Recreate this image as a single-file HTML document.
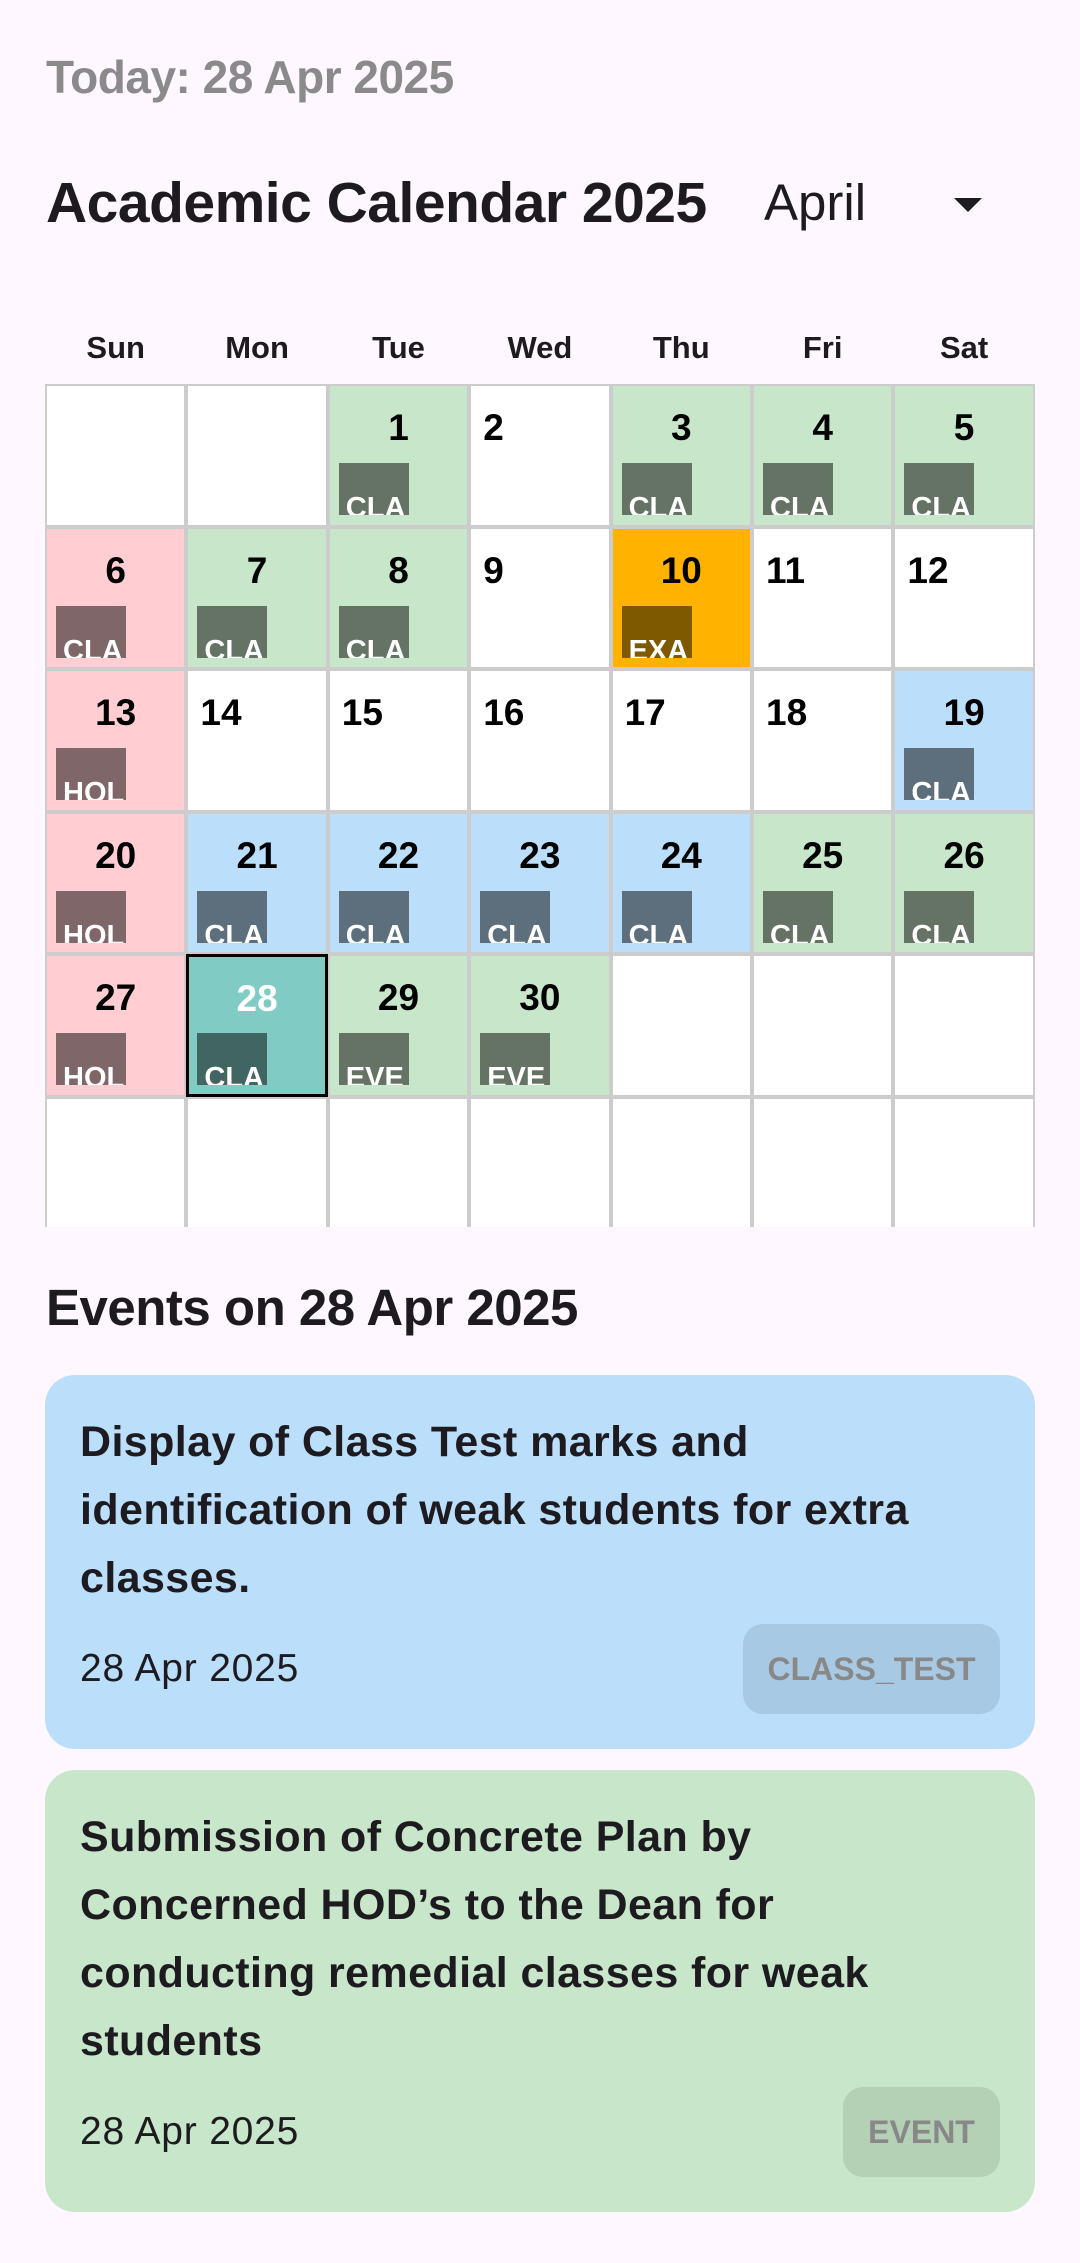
<!DOCTYPE html>
<html><head><meta charset="utf-8"><style>
*{box-sizing:border-box;margin:0;padding:0}
body{width:1080px;height:2263px;background:#fef7ff;font-family:"Liberation Sans",sans-serif;color:#1d1b20;position:relative;overflow:hidden}
.abs{position:absolute;white-space:nowrap}
#today{left:46px;top:50px;font-size:46px;font-weight:bold;color:#8a8a8a;letter-spacing:-0.5px}
#title{left:46px;top:170px;font-size:57px;font-weight:bold;letter-spacing:-0.5px}
#month{left:764px;top:173px;font-size:51px}
#tri{left:954px;top:198px;width:0;height:0;border-left:14px solid transparent;border-right:14px solid transparent;border-top:14px solid #1d1b20}
.dh{position:absolute;top:330px;width:141.4px;text-align:center;font-size:31px;font-weight:bold}
#grid{position:absolute;left:45px;top:384px;width:990px;height:843px;overflow:hidden}
.c{position:absolute;width:141.4px;height:142.5px;border:2px solid #ccc;background:#fff}
.n{position:absolute;top:20px;font-size:37px;font-weight:bold;color:#000;line-height:44px}
.col .n{left:0;right:0;text-align:center}
.wh .n{left:12px}
.b{position:absolute;left:9px;top:77px;width:70px;height:52px;overflow:hidden;color:#fff;font-weight:bold;font-size:29px;line-height:28px;padding:31px 0 0 7px;background:rgba(0,0,0,.5)}
.g{background:#c8e6c9}.p{background:#ffcdd2}.bl{background:#bbdefb}.o{background:#ffb300}
.t{background:#80cbc4;border:3px solid #000}.t .n{color:#fff}
#ev{left:46px;top:1278px;font-size:51px;font-weight:bold;letter-spacing:-0.5px}
.card{position:absolute;left:45px;width:990px;border-radius:30px;padding:33px 35px 35px 35px}
.card .tx{font-size:43px;font-weight:bold;line-height:68px;white-space:nowrap;letter-spacing:0.4px}
.row{margin-top:12px;height:90px;position:relative}
.date{position:absolute;left:0;top:0;line-height:90px;font-size:39px;letter-spacing:0.8px}
.chip{position:absolute;right:0;top:0;height:90px;border-radius:20px;line-height:90px;text-align:center;font-size:32px;font-weight:bold;color:#888}
</style></head><body>
<div class="abs" id="today">Today: 28 Apr 2025</div>
<div class="abs" id="title">Academic Calendar 2025</div>
<div class="abs" id="month">April</div>
<div class="abs" id="tri"></div>
<div class="dh" style="left:45px">Sun</div>
<div class="dh" style="left:186.4px">Mon</div>
<div class="dh" style="left:327.8px">Tue</div>
<div class="dh" style="left:469.2px">Wed</div>
<div class="dh" style="left:610.6px">Thu</div>
<div class="dh" style="left:752px">Fri</div>
<div class="dh" style="left:893.4px">Sat</div>
<div id="grid">
<div class="c wh" style="left:0;top:0"></div>
<div class="c wh" style="left:141.4px;top:0"></div>
<div class="c col g" style="left:282.8px;top:0"><div class="n">1</div><div class="b">CLA</div></div>
<div class="c wh" style="left:424.2px;top:0"><div class="n">2</div></div>
<div class="c col g" style="left:565.6px;top:0"><div class="n">3</div><div class="b">CLA</div></div>
<div class="c col g" style="left:707px;top:0"><div class="n">4</div><div class="b">CLA</div></div>
<div class="c col g" style="left:848.4px;top:0"><div class="n">5</div><div class="b">CLA</div></div>
<div class="c col p" style="left:0;top:142.5px"><div class="n">6</div><div class="b">CLA</div></div>
<div class="c col g" style="left:141.4px;top:142.5px"><div class="n">7</div><div class="b">CLA</div></div>
<div class="c col g" style="left:282.8px;top:142.5px"><div class="n">8</div><div class="b">CLA</div></div>
<div class="c wh" style="left:424.2px;top:142.5px"><div class="n">9</div></div>
<div class="c col o" style="left:565.6px;top:142.5px"><div class="n">10</div><div class="b">EXA</div></div>
<div class="c wh" style="left:707px;top:142.5px"><div class="n">11</div></div>
<div class="c wh" style="left:848.4px;top:142.5px"><div class="n">12</div></div>
<div class="c col p" style="left:0;top:285px"><div class="n">13</div><div class="b">HOL</div></div>
<div class="c wh" style="left:141.4px;top:285px"><div class="n">14</div></div>
<div class="c wh" style="left:282.8px;top:285px"><div class="n">15</div></div>
<div class="c wh" style="left:424.2px;top:285px"><div class="n">16</div></div>
<div class="c wh" style="left:565.6px;top:285px"><div class="n">17</div></div>
<div class="c wh" style="left:707px;top:285px"><div class="n">18</div></div>
<div class="c col bl" style="left:848.4px;top:285px"><div class="n">19</div><div class="b">CLA</div></div>
<div class="c col p" style="left:0;top:427.5px"><div class="n">20</div><div class="b">HOL</div></div>
<div class="c col bl" style="left:141.4px;top:427.5px"><div class="n">21</div><div class="b">CLA</div></div>
<div class="c col bl" style="left:282.8px;top:427.5px"><div class="n">22</div><div class="b">CLA</div></div>
<div class="c col bl" style="left:424.2px;top:427.5px"><div class="n">23</div><div class="b">CLA</div></div>
<div class="c col bl" style="left:565.6px;top:427.5px"><div class="n">24</div><div class="b">CLA</div></div>
<div class="c col g" style="left:707px;top:427.5px"><div class="n">25</div><div class="b">CLA</div></div>
<div class="c col g" style="left:848.4px;top:427.5px"><div class="n">26</div><div class="b">CLA</div></div>
<div class="c col p" style="left:0;top:570px"><div class="n">27</div><div class="b">HOL</div></div>
<div class="c col t" style="left:141.4px;top:570px"><div class="n">28</div><div class="b" style="left:8px;top:76px">CLA</div></div>
<div class="c col g" style="left:282.8px;top:570px"><div class="n">29</div><div class="b">EVE</div></div>
<div class="c col g" style="left:424.2px;top:570px"><div class="n">30</div><div class="b">EVE</div></div>
<div class="c wh" style="left:565.6px;top:570px"></div>
<div class="c wh" style="left:707px;top:570px"></div>
<div class="c wh" style="left:848.4px;top:570px"></div>
<div class="c wh" style="left:0;top:712.5px"></div>
<div class="c wh" style="left:141.4px;top:712.5px"></div>
<div class="c wh" style="left:282.8px;top:712.5px"></div>
<div class="c wh" style="left:424.2px;top:712.5px"></div>
<div class="c wh" style="left:565.6px;top:712.5px"></div>
<div class="c wh" style="left:707px;top:712.5px"></div>
<div class="c wh" style="left:848.4px;top:712.5px"></div>
</div>
<div class="abs" id="ev">Events on 28 Apr 2025</div>
<div class="card" style="top:1375px;background:#bbdefb">
<div class="tx">Display of Class Test marks and<br>identification of weak students for extra<br>classes.</div>
<div class="row"><div class="date">28 Apr 2025</div><div class="chip" style="width:257px;background:#a8c9e3">CLASS_TEST</div></div>
</div>
<div class="card" style="top:1770px;background:#c8e6c9">
<div class="tx">Submission of Concrete Plan by<br>Concerned HOD’s to the Dean for<br>conducting remedial classes for weak<br>students</div>
<div class="row"><div class="date">28 Apr 2025</div><div class="chip" style="width:157px;background:#b4d0b5">EVENT</div></div>
</div>
</body></html>
